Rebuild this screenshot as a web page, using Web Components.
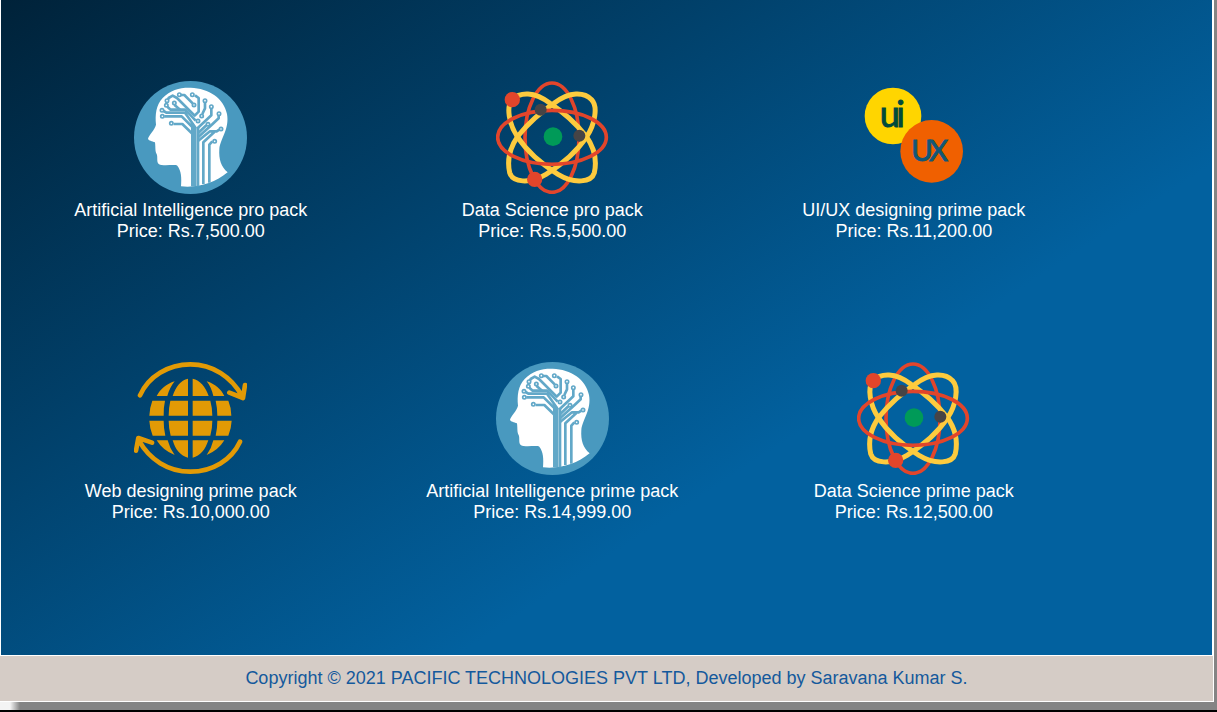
<!DOCTYPE html>
<html lang="en">
<head>
<meta charset="utf-8">
<title>Pacific Technologies</title>
<style>
html { height: 100%; }
body { margin: 0; min-height: 100%; display: flex; background: #000; font: 18px/21px "Liberation Sans", Arial, sans-serif; }
</style>
</head>
<body>
<store-page></store-page>

<template id="icon-ai">
<svg viewBox="27 27 339 339" aria-hidden="true">
<circle cx="196.500" cy="196.500" r="169.500" fill="#4999bf"/>
<path fill="#fff" d="M168 343C170 318 169 296 157 281C148 276 113 284 101 276C94 270 99 255 95 246C90 238 92 229 90 211C81 206 71 207 69 200C71 190 89 174 93 158C90 128 93 99 113 78C136 53 166 46 197 47C252 49 297 79 306 126C314 171 287 198 283 231C281 263 288 284 308 301C269 334 218 348 168 343Z"/>
<g fill="none" stroke="#62a8c8" stroke-width="8" stroke-linejoin="round">
<path d="M202 343V185L172 156H146M118 133H170L202 165V185M210 343V165L180 122H124L116 117M219 343V165M127 104L137 113H181L212 146"/>
<path d="M125 92L131 78L143 71L156 78L209 131L221 119V78L210 70M148 98L166 114M168 69H178L203 94M240 91V109L232 126M259 109V130L216 170"/>
<path d="M219 184L244 160M219 196L262 157L281 139V130M219 207L255 178H275L283 173M235 336V211L268 180M253 332V218L262 208"/>
</g>
<g fill="#fff" stroke="#62a8c8" stroke-width="5">
<circle cx="163" cy="68" r="5"/><circle cx="202" cy="68" r="5"/><circle cx="126" cy="86" r="5"/><circle cx="148" cy="93" r="5"/><circle cx="124" cy="100" r="5"/><circle cx="111" cy="115" r="5"/><circle cx="112" cy="133" r="5"/><circle cx="139" cy="154" r="5"/><circle cx="207" cy="99" r="5"/><circle cx="240" cy="86" r="5"/><circle cx="259" cy="104" r="5"/><circle cx="230" cy="132" r="5"/><circle cx="219" cy="147" r="5"/><circle cx="282" cy="125" r="5"/><circle cx="249" cy="157" r="5"/><circle cx="288" cy="171" r="5"/><circle cx="269" cy="208" r="5"/>
</g>
</svg>
</template>

<template id="icon-science">
<svg viewBox="27 27 339 339" aria-hidden="true">
<g fill="none">
<ellipse cx="195" cy="197" rx="81" ry="164" stroke="#e2452b" stroke-width="11"/>
<g stroke="#fdcb3e" stroke-width="15">
<path d="M76 83C98 60 142 57 189 94C232 122 269 157 297 192C324 230 330 266 322 302C313 331 263 337 213 307C170 280 119 237 91 194C67 158 56 104 76 83Z"/>
<path d="M314 83C292 60 248 57 201 94C158 122 121 157 93 192C66 230 60 266 68 302C77 331 127 337 177 307C220 280 271 237 299 194C323 158 334 104 314 83Z"/>
</g>
<ellipse cx="195" cy="196" rx="163" ry="81" stroke="#e2452b" stroke-width="11"/>
</g>
<circle cx="76" cy="83" r="23" fill="#e2452b"/><circle cx="143" cy="322" r="23" fill="#e2452b"/>
<circle cx="161" cy="113" r="18" fill="#464446"/><circle cx="277" cy="191" r="18" fill="#464446"/>
<circle cx="198" cy="194" r="28" fill="#009a58"/>
</svg>
</template>

<template id="icon-uiux">
<svg viewBox="21 15 339 339" aria-hidden="true" font-family="Lato, sans-serif">
<circle cx="129" cy="120" r="85" fill="#ffd500"/>
<circle cx="245" cy="226" r="94" fill="#f06000"/>
<g stroke-width="3">
<text x="89 139" y="154" font-size="108" fill="#004a3c" stroke="#004a3c">ui</text>
<text x="184 237" y="256" font-size="88" fill="#115777" stroke="#115777">UX</text>
</g>
</svg>
</template>

<template id="icon-web">
<svg viewBox="27 27 339 339" aria-hidden="true">
<g fill="#e29a05">
<path d="M189 77V129H143C152 102 167 81 189 77ZM203 77C225 81 242 102 251 129H203ZM149 85C139 97 132 112 127 129H95C106 108 124 93 149 85ZM245 85C270 93 288 108 298 129H265C261 112 255 97 245 85Z"/>
<path d="M82 143H120Q115 166 116 188H73Q74 164 82 143ZM136 143H189V188H131Q131 165 136 143ZM203 143H256Q262 165 262 188H203ZM272 143H310Q319 164 319 188H277Q277 165 272 143Z"/>
<path d="M73 203H116Q116 226 121 248H83Q74 226 73 203ZM131 203H189V248H137Q131 226 131 203ZM203 203H262Q262 226 256 248H203ZM277 203H320Q319 226 310 248H272Q277 226 277 203Z"/>
<path d="M95 262H128Q134 286 149 306Q113 292 95 262ZM143 262H189V314C167 309 151 290 143 262ZM203 262H250C241 290 226 309 203 314ZM265 262H298Q280 292 245 306Q260 285 265 262Z"/>
</g>
<g fill="none" stroke="#e29a05" stroke-width="14" stroke-linecap="round" stroke-linejoin="round">
<path d="M45 127C70 70 130 34 196 34C263 34 319 71 351 129M313 119L354 135L360 96"/>
<path d="M345 266C320 320 263 356 196 356C129 356 73 319 42 263M33 293L40 255L81 269"/>
</g>
</svg>
</template>

<script>
class CourseCard extends HTMLElement {
  constructor() {
    super();
    const root = this.attachShadow({ mode: "open" });
    root.innerHTML = `<style>
      :host { display: flex; flex-direction: column; align-items: center; text-align: center; color: #fff; }
      svg { display: block; width: 113px; height: 113px; margin-bottom: 6px; }
      p { margin: 0; }
    </style><p><slot></slot></p><p><slot name="price"></slot></p>`;
    const icon = document.getElementById("icon-" + this.getAttribute("icon"));
    if (icon) root.insertBefore(icon.content.cloneNode(true), root.querySelector("p"));
  }
}
class CourseGrid extends HTMLElement {
  constructor() {
    super();
    this.attachShadow({ mode: "open" }).innerHTML = `<style>
      :host { display: block; flex: 1; margin: 0 2px 0 1px; background: linear-gradient(147deg, #002239, #02619f 66%); }
      section { display: grid; grid-template-columns: repeat(3, 1fr); row-gap: 120px; margin-right: 9.7%; padding: 81px 0 120px 9px; }
    </style><section><slot></slot></section>`;
  }
}
class SiteFooter extends HTMLElement {
  constructor() {
    super();
    this.attachShadow({ mode: "open" }).innerHTML = `<style>
      :host { display: block; background: #d5ccc6; color: #14599c; text-align: center; border: solid #fff; border-width: 1px 1px 1px 0; padding: 12px 0; }
      footer { display: block; }
    </style><footer><slot></slot></footer>`;
  }
}
class StorePage extends HTMLElement {
  constructor() {
    super();
    this.attachShadow({ mode: "open" }).innerHTML = `<style>
      :host { flex: 1; display: flex; margin-bottom: 2px; padding: 0 3px 8px 0; background: linear-gradient(90deg, #f4f4f4 10px, #848484 20px); }
      main { flex: 1; display: flex; flex-direction: column; background: #fff; }
    </style><main>
      <course-grid>
        <course-card icon="ai">Artificial Intelligence pro pack<span slot="price">Price: Rs.7,500.00</span></course-card>
        <course-card icon="science">Data Science pro pack<span slot="price">Price: Rs.5,500.00</span></course-card>
        <course-card icon="uiux">UI/UX designing prime pack<span slot="price">Price: Rs.11,200.00</span></course-card>
        <course-card icon="web">Web designing prime pack<span slot="price">Price: Rs.10,000.00</span></course-card>
        <course-card icon="ai">Artificial Intelligence prime pack<span slot="price">Price: Rs.14,999.00</span></course-card>
        <course-card icon="science">Data Science prime pack<span slot="price">Price: Rs.12,500.00</span></course-card>
      </course-grid>
      <site-footer>Copyright © 2021 PACIFIC TECHNOLOGIES PVT LTD, Developed by Saravana Kumar S.</site-footer>
    </main>`;
  }
}
customElements.define("course-card", CourseCard);
customElements.define("course-grid", CourseGrid);
customElements.define("site-footer", SiteFooter);
customElements.define("store-page", StorePage);
</script>
</body>
</html>
